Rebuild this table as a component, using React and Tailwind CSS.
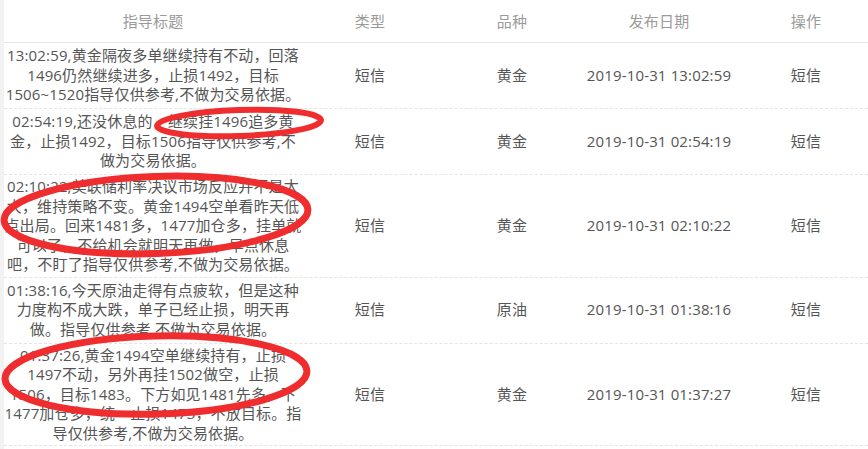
import React from 'react'

const rows = [
  {
    title: ['13:02:59,黄金隔夜多单继续持有不动，回落', '1496仍然继续进多，止损1492，目标', '1506~1520指导仅供参考,不做为交易依据。'],
    type: '短信', kind: '黄金', date: '2019-10-31 13:02:59',
  },
  {
    title: ['02:54:19,还没休息的，继续挂1496追多黄', '金，止损1492，目标1506指导仅供参考,不', '做为交易依据。'],
    type: '短信', kind: '黄金', date: '2019-10-31 02:54:19',
  },
  {
    title: ['02:10:22,美联储利率决议市场反应并不是太', '大，维持策略不变。黄金1494空单看昨天低', '点出局。回来1481多，1477加仓多，挂单就', '可以了，不给机会就明天再做，早点休息', '吧，不盯了指导仅供参考,不做为交易依据。'],
    type: '短信', kind: '黄金', date: '2019-10-31 02:10:22',
  },
  {
    title: ['01:38:16,今天原油走得有点疲软，但是这种', '力度构不成大跌，单子已经止损，明天再', '做。指导仅供参考,不做为交易依据。'],
    type: '短信', kind: '原油', date: '2019-10-31 01:38:16',
  },
  {
    title: ['01:37:26,黄金1494空单继续持有，止损', '1497不动，另外再挂1502做空，止损', '1506，目标1483。下方如见1481先多，下', '1477加仓多，统一止损1473，不放目标。指', '导仅供参考,不做为交易依据。'],
    type: '短信', kind: '黄金', date: '2019-10-31 01:37:27',
  },
]

const cols = 'grid grid-cols-[298px_136px_148px_146px_148px]'

export default function App(){
  return (
    <div className="relative w-[868px] h-[449px] overflow-hidden bg-white flex font-['Open_Sans','Noto_Sans_CJK_SC',sans-serif] text-[15px] tracking-[0.15px]">
      <div className="w-[4px] shrink-0 bg-[#f2f2f2]" />
      <div className="flex-1 min-w-0">
        <div className={`${cols} h-[43px] items-center border-b border-[#e6e6e6] text-[#9a9a9a]`}>
          <div className="text-center">指导标题</div>
          <div className="text-center">类型</div>
          <div className="text-center">品种</div>
          <div className="text-center">发布日期</div>
          <div className="text-center">操作</div>
        </div>
        {rows.map((r, i) => (
          <div key={i} className={`${cols} min-h-[66px] items-center py-[2px] border-b border-dashed border-[#e4e4e4] text-[#555] leading-[19.5px]`}>
            <div className="text-center whitespace-nowrap">
              {r.title.map((t, j) => <div key={j}>{t}</div>)}
            </div>
            <div className="text-center">{r.type}</div>
            <div className="text-center">{r.kind}</div>
            <div className="text-center whitespace-nowrap">{r.date}</div>
            <div className="text-center">短信</div>
          </div>
        ))}
      </div>

      {/* hand-drawn red marks */}
      <svg className="absolute inset-0 pointer-events-none" width="868" height="449" viewBox="0 0 868 449">
        <g fill="none" stroke="#ef2c2e">
          <ellipse cx="239" cy="123" rx="82" ry="13" strokeWidth="6" transform="rotate(-2 239 123)" />
          <ellipse cx="156" cy="215" rx="152" ry="38.5" strokeWidth="7" transform="rotate(-2 156 215)" />
          <ellipse cx="156" cy="375" rx="151" ry="39" strokeWidth="7" transform="rotate(-1.5 156 375)" />
        </g>
      </svg>
    </div>
  )
}
